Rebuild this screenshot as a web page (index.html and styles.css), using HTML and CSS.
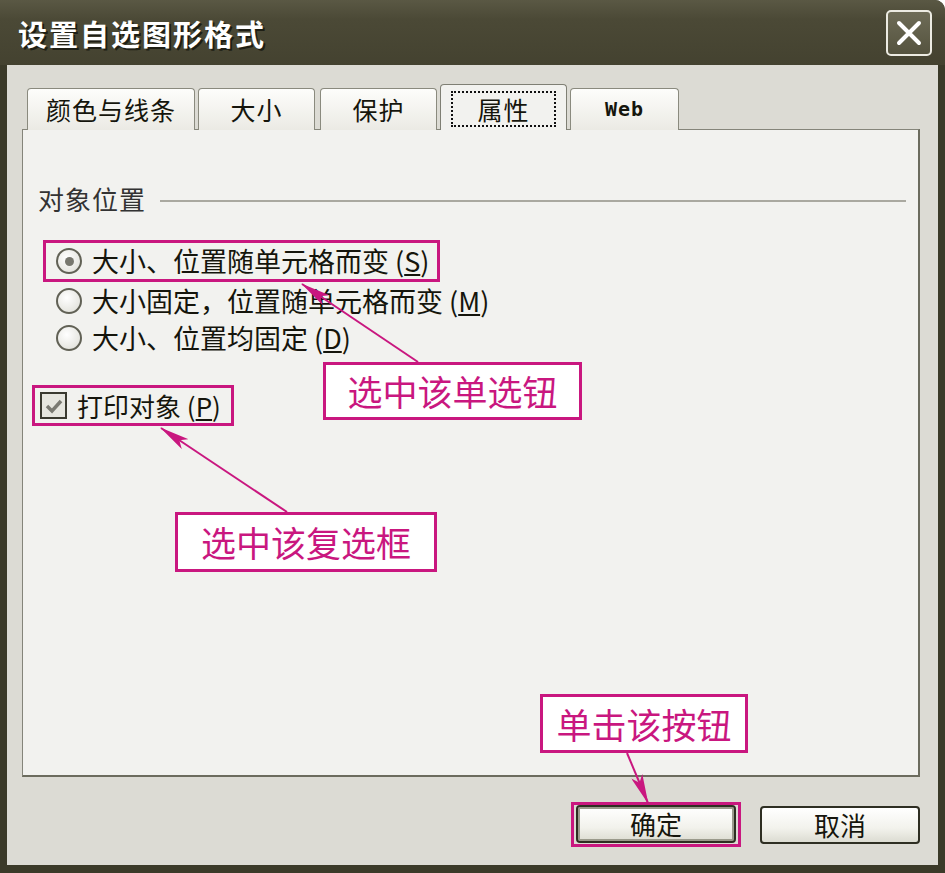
FILE: index.html
```html
<!DOCTYPE html>
<html lang="zh-CN">
<head>
  <meta charset="UTF-8" />
  <meta name="viewport" content="width=device-width, initial-scale=1.0"/>
  <title>设置自选图形格式</title>
  <link rel="stylesheet" href="styles.css">
</head>
<body>
  <div class="window">
    <div class="titlebar">
      <span class="title">设置自选图形格式</span>
      <div class="close">
        <svg width="30" height="30" viewBox="0 0 30 30">
          <path d="M5 5 L25 25 M25 5 L5 25" stroke="#fff" stroke-width="4" stroke-linecap="round"/>
        </svg>
      </div>
    </div>

    <div class="client">
      <div class="tabs">
        <div class="tab tab-color">颜色与线条</div>
        <div class="tab tab-size">大小</div>
        <div class="tab tab-protect">保护</div>
        <div class="tab tab-active"><span class="focus">属性</span></div>
        <div class="tab tab-web">Web</div>
      </div>

      <div class="panel">
        <div class="group-head">
          <span class="group-label">对象位置</span>
          <span class="group-line"></span>
        </div>

        <div class="radios">
          <label class="option mark">
            <span class="radio checked"></span>
            <span>大小、位置随单元格而变 (<u>S</u>)</span>
          </label>
          <label class="option">
            <span class="radio"></span>
            <span>大小固定，位置随单元格而变 (<u>M</u>)</span>
          </label>
          <label class="option">
            <span class="radio"></span>
            <span>大小、位置均固定 (<u>D</u>)</span>
          </label>
        </div>

        <label class="check mark">
          <span class="box">
            <svg width="20" height="20" viewBox="0 0 20 20">
              <path d="M3 10 L8 15 L17 5" stroke="#7a7a72" stroke-width="3.5" fill="none"/>
            </svg>
          </span>
          <span>打印对象 (<u>P</u>)</span>
        </label>
      </div>

      <div class="actions">
        <span class="btn-mark"><button class="btn">确定</button></span>
        <button class="btn">取消</button>
      </div>
    </div>

    <!-- annotations -->
    <svg class="arrows" width="945" height="873">
      <defs>
        <marker id="head" viewBox="0 0 30 12" refX="29" refY="6" markerWidth="30" markerHeight="12" markerUnits="userSpaceOnUse" orient="auto">
          <path d="M0 0 L30 6 L0 12 L7 6 z" fill="#c9177f"/>
        </marker>
      </defs>
      <line x1="418" y1="362" x2="302" y2="284" stroke="#c9177f" stroke-width="2" marker-end="url(#head)"/>
      <line x1="287" y1="512" x2="161" y2="428" stroke="#c9177f" stroke-width="2" marker-end="url(#head)"/>
      <line x1="627" y1="753" x2="648" y2="803" stroke="#c9177f" stroke-width="2" marker-end="url(#head)"/>
    </svg>
    <div class="callout callout-radio">选中该单选钮</div>
    <div class="callout callout-check">选中该复选框</div>
    <div class="callout callout-ok">单击该按钮</div>
  </div>
</body>
</html>
```

FILE: styles.css
```css
:root {
  --frame: #3b3a29;
  --client: #dcdbd4;
  --panel: #f2f2ef;
  --pink: #c9177f;
  --ink: #15150c;
}
* { box-sizing: border-box; }
body {
  margin: 0;
  background: #fff;
  font-family: "Noto Sans CJK SC", "Liberation Sans", sans-serif;
}
.window {
  position: relative;
  width: 945px;
  height: 873px;
  background: var(--frame);
  border-top-right-radius: 10px;
  display: flex;
  flex-direction: column;
  overflow: hidden;
}
.titlebar {
  height: 65px;
  flex: none;
  display: flex;
  align-items: center;
  justify-content: space-between;
  padding: 0 13px 0 18px;
  background: linear-gradient(#5a5844, #4b4936 30%, #444230);
}
.title {
  color: #fff;
  font-size: 29px;
  font-weight: 700;
  letter-spacing: 2px;
  line-height: 36px;
  text-shadow: 2px 2px 0 #1e1e14;
}
.close {
  width: 46px;
  height: 46px;
  border: 2px solid #ecebe2;
  border-radius: 5px;
  background: linear-gradient(#6e6c57, #55533f);
  display: flex;
  align-items: center;
  justify-content: center;
}
.client {
  flex: 1;
  margin: 0 7px 8px 7px;
  background: var(--client);
  padding: 20px 18px 0 15px;
}
.tabs {
  position: relative;
  z-index: 1;
  height: 45px;
  display: flex;
  align-items: flex-end;
  padding-left: 5px;
  margin-bottom: -1px;
}
.tab {
  height: 42px;
  margin-right: 3px;
  border: 1px solid #8a8a7e;
  border-bottom: none;
  border-radius: 4px 4px 0 0;
  background: linear-gradient(#fdfdfb, #ebeae4);
  color: var(--ink);
  font-size: 25px;
  letter-spacing: 1px;
  line-height: 40px;
  text-align: center;
}
.tab-color { width: 168px; }
.tab-size { width: 117px; margin-right: 5px; }
.tab-protect { width: 117px; }
.tab-web {
  width: 109px;
  font-family: "DejaVu Sans Mono", monospace;
  font-size: 20px;
  font-weight: 700;
}
.tab-active {
  width: 127px;
  height: 46px;
  background: var(--panel);
  border-color: #7f7f74;
  padding-top: 6px;
}
.focus {
  display: block;
  margin: 0 10px;
  height: 36px;
  line-height: 32px;
  border: 2px dotted #111;
}
.panel {
  height: 648px;
  background: var(--panel);
  border: 1px solid #85857a;
  border-right: 2px solid #6c6c5e;
  border-bottom: 2px solid #6c6c5e;
  padding: 54px 12px 0 15px;
}
.group-head {
  display: flex;
  align-items: center;
  height: 30px;
}
.group-label {
  color: #333;
  font-size: 26px;
  letter-spacing: 1px;
  line-height: 30px;
}
.group-line {
  flex: 1;
  margin-left: 14px;
  margin-top: 4px;
  border-top: 2px solid #aaa9a0;
}
.radios {
  margin: 26px 0 0 5px;
  display: flex;
  flex-direction: column;
  align-items: flex-start;
}
.option {
  display: flex;
  align-items: center;
  gap: 10px;
  height: 37px;
  padding-left: 13px;
  color: var(--ink);
  font-size: 27px;
  line-height: 30px;
}
.option.mark {
  height: 42px;
  padding: 0 8px 0 10px;
}
.mark {
  border: 3px solid var(--pink);
}
.radio {
  width: 26px;
  height: 26px;
  border: 2px solid #616155;
  border-radius: 50%;
  background: radial-gradient(circle at 40% 35%, #ffffff, #dcdcd4);
  display: flex;
  align-items: center;
  justify-content: center;
}
.radio.checked::after {
  content: "";
  width: 9px;
  height: 9px;
  border-radius: 50%;
  background: #77776e;
}
.check {
  display: inline-flex;
  align-items: center;
  gap: 10px;
  height: 41px;
  margin: 29px 0 0 -6px;
  padding: 0 10px 0 5px;
  color: var(--ink);
  font-size: 26px;
  line-height: 30px;
}
.box {
  width: 27px;
  height: 27px;
  border: 2px solid #3a3a30;
  background: #e6e6df;
  display: flex;
  align-items: center;
  justify-content: center;
}
.actions {
  margin-top: 25px;
  display: flex;
  justify-content: flex-end;
  align-items: center;
  gap: 19px;
}
.btn-mark {
  display: flex;
  border: 3px solid var(--pink);
  padding: 0 2px 1px 2px;
}
.btn {
  width: 160px;
  height: 38px;
  border: 2px solid #2e2e22;
  border-radius: 4px;
  background: linear-gradient(#ffffff, #f2f2ec 60%, #dcdcd2);
  color: var(--ink);
  font-family: "Noto Sans CJK SC", sans-serif;
  font-size: 26px;
  line-height: 30px;
  padding: 0;
}
.btn-mark .btn {
  box-shadow: inset 0 0 0 2px #9a9a8c;
}
.arrows {
  position: absolute;
  top: 0;
  left: 0;
  pointer-events: none;
}
.callout {
  position: absolute;
  background: #fff;
  border: 3px solid var(--pink);
  color: var(--pink);
  font-size: 35px;
  line-height: 40px;
  display: flex;
  align-items: center;
  justify-content: center;
}
.callout-radio { left: 323px; top: 362px; width: 259px; height: 58px; }
.callout-check { left: 175px; top: 512px; width: 262px; height: 60px; }
.callout-ok { left: 540px; top: 694px; width: 208px; height: 59px; }
```
